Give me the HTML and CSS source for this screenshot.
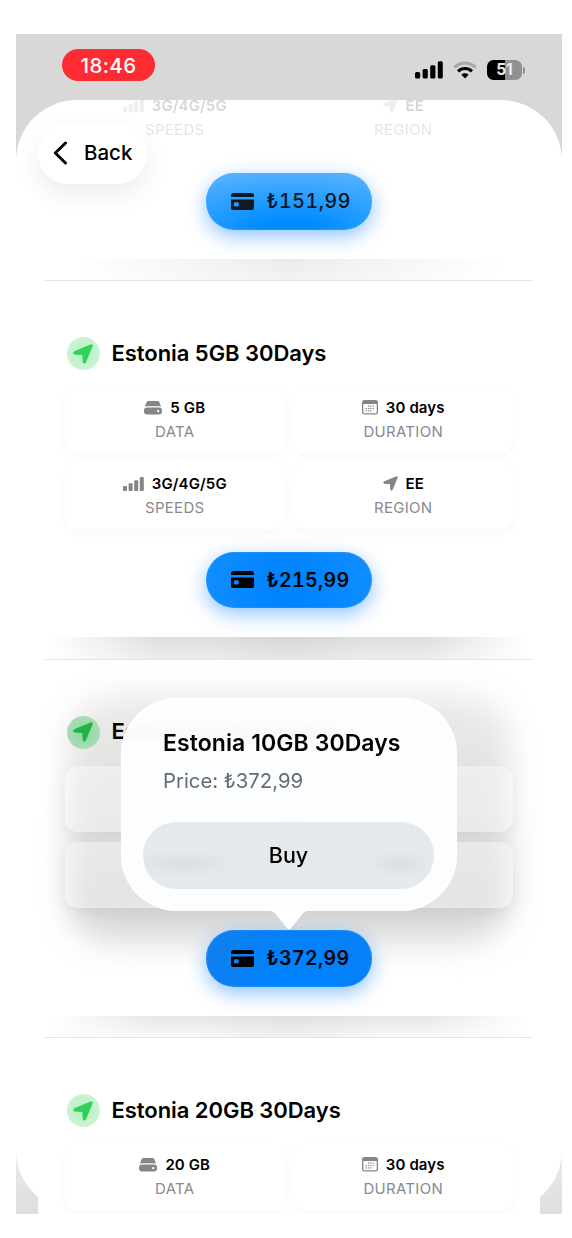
FILE: index.html
```html
<!DOCTYPE html>
<html lang="en">
<head>
<meta charset="utf-8">
<title>eSIM plans</title>
<link rel="stylesheet" href="styles.css">
</head>
<body>
<svg class="defs" width="0" height="0" aria-hidden="true">
  <symbol id="i-arrow" viewBox="0 0 20 20"><path stroke-width="1.200" stroke-linejoin="round" d="M18.700 1c.5.2.5.7.3 1.200L12.300 18.300c-.5 1.100-2 .8-2-.4L9.900 10.300 2 9.900C.800 9.800.4 8.300 1.600 7.800L17.800 1c.3-.1.600-.1.9 0z"/></symbol>
  <symbol id="i-bars" viewBox="0 0 21 14"><rect x="0" y="9" width="4" height="5" rx="1"/><rect x="5.600" y="6.300" width="4" height="7.700" rx="1"/><rect x="11.200" y="3.300" width="4" height="10.700" rx="1"/><rect x="16.800" y="0" width="4" height="14" rx="1"/></symbol>
  <symbol id="i-drive" viewBox="0 0 18 14"><path d="M4.800 0h8.400c1.200 0 1.900.5 2.300 1.500l1.600 4.200c-.6-.3-1.200-.4-1.900-.4H2.800c-.7 0-1.300.1-1.900.4l1.600-4.200C2.900.5 3.600 0 4.800 0z"/><path fill-rule="evenodd" d="M3 6.600h12a3 3 0 0 1 3 3v1a3 3 0 0 1-3 3H3a3 3 0 0 1-3-3v-1a3 3 0 0 1 3-3zm11.200 2.300a1.200 1.200 0 1 0 0 2.400 1.200 1.200 0 0 0 0-2.400z"/></symbol>
  <symbol id="i-cal" viewBox="0 0 16 15"><path fill-rule="evenodd" d="M2.500 0h11A2.500 2.500 0 0 1 16 2.500v9.500a2.500 2.500 0 0 1-2.500 2.500h-11A2.500 2.500 0 0 1 0 12V2.500A2.500 2.500 0 0 1 2.500 0zM1.300 4v8c0 .8.500 1.300 1.300 1.300h10.800c.8 0 1.300-.5 1.300-1.300V4z"/><path d="M6 5.500h1.300v1.200H6zm2.300 0h1.300v1.200H8.300zm2.300 0h1.300v1.200h-1.300zM3.700 7.900H5v1.200H3.700zm2.300 0h1.300v1.200H6zm2.300 0h1.300v1.200H8.300zm2.300 0h1.300v1.200h-1.300zM3.700 10.300H5v1.200H3.700zm2.300 0h1.300v1.200H6zm2.300 0h1.300v1.200H8.300z"/></symbol>
  <symbol id="i-card" viewBox="0 0 23 17"><path d="M2.600 0h17.800A2.600 2.600 0 0 1 23 2.600V4H0V2.600A2.600 2.600 0 0 1 2.600 0z"/><path fill-rule="evenodd" d="M0 6.500h23v7.900a2.600 2.600 0 0 1-2.600 2.600H2.600A2.600 2.600 0 0 1 0 14.400zM4 9.300c-.6 0-1 .4-1 1v2.200c0 .6.400 1 1 1h2.700c.6 0 1-.4 1-1v-2.200c0-.6-.4-1-1-1z"/></symbol>
</svg>

<main class="screen">
  <header class="status">
    <span class="clock">18:46</span>
    <div class="status-icons">
      <svg class="signal" width="28" height="18" viewBox="0 0 28 18"><rect x="0" y="11" width="5.200" height="6.500" rx="1.500"/><rect x="7.600" y="8" width="5.200" height="9.500" rx="1.500"/><rect x="15.200" y="4.300" width="5.200" height="13.200" rx="1.500"/><rect x="22.800" y="0.300" width="5" height="17.200" rx="1.500"/></svg>
      <svg class="wifi" width="24" height="18" viewBox="0 0 24 18"><g fill="none" stroke-width="3.200"><path stroke="#a8a8a8" d="M1.400 6.400a15.200 15.200 0 0 1 21.200 0"/><path stroke="#000" d="M5.100 10.300a9.900 9.900 0 0 1 13.800 0"/></g><path d="M12 17.500 8.400 13.800a5.200 5.200 0 0 1 7.200 0z"/></svg>
      <div class="battery"><span class="level">51</span><i class="nub"></i></div>
    </div>
  </header>

  <section class="sheet">
    <div class="list">
      <article class="plan plan--partial">
        <div class="tiles tiles--faded">
          <div class="tile"><div class="value"><svg class="ic bars"><use href="#i-bars"/></svg><b>3G/4G/5G</b></div><span class="label">SPEEDS</span></div>
          <div class="tile"><div class="value"><svg class="ic arrow"><use href="#i-arrow"/></svg><b>EE</b></div><span class="label">REGION</span></div>
        </div>
        <button class="buy buy--light"><svg class="ic card"><use href="#i-card"/></svg><span>₺151,99</span></button>
        <div class="foot foot--faint"></div>
      </article>

      <article class="plan">
        <h2 class="title"><span class="dot"><svg class="pin"><use href="#i-arrow"/></svg></span><span>Estonia 5GB 30Days</span></h2>
        <div class="tiles">
          <div class="tile"><div class="value"><svg class="ic drive"><use href="#i-drive"/></svg><b>5 GB</b></div><span class="label">DATA</span></div>
          <div class="tile"><div class="value"><svg class="ic cal"><use href="#i-cal"/></svg><b>30 days</b></div><span class="label">DURATION</span></div>
          <div class="tile"><div class="value"><svg class="ic bars"><use href="#i-bars"/></svg><b>3G/4G/5G</b></div><span class="label">SPEEDS</span></div>
          <div class="tile"><div class="value"><svg class="ic arrow"><use href="#i-arrow"/></svg><b>EE</b></div><span class="label">REGION</span></div>
        </div>
        <button class="buy"><svg class="ic card"><use href="#i-card"/></svg><span>₺215,99</span></button>
        <div class="foot"></div>
      </article>

      <article class="plan plan--active">
        <h2 class="title"><span class="dot"><svg class="pin"><use href="#i-arrow"/></svg></span><span>Estonia 10GB 30Days</span></h2>
        <div class="tiles">
          <div class="tile"></div>
          <div class="tile"></div>
          <div class="tile"></div>
          <div class="tile"></div>
        </div>
        <button class="buy buy--pressed"><svg class="ic card"><use href="#i-card"/></svg><span>₺372,99</span></button>
        <div class="foot foot--soft"></div>
        <div class="popover">
          <h3 class="pop-title">Estonia 10GB 30Days</h3>
          <p class="pop-price">Price: ₺372,99</p>
          <button class="confirm">Buy</button>
          <svg class="tail" width="44" height="21" viewBox="0 0 44 21"><path d="M0 0h44c-4 .2-6 1.500-9 4.500L24 18.200c-1.200 1.300-2.800 1.300-4 0L9 4.500C6 1.500 4 .2 0 0z"/></svg>
        </div>
      </article>

      <article class="plan">
        <h2 class="title"><span class="dot"><svg class="pin"><use href="#i-arrow"/></svg></span><span>Estonia 20GB 30Days</span></h2>
        <div class="tiles">
          <div class="tile"><div class="value"><svg class="ic drive"><use href="#i-drive"/></svg><b>20 GB</b></div><span class="label">DATA</span></div>
          <div class="tile"><div class="value"><svg class="ic cal"><use href="#i-cal"/></svg><b>30 days</b></div><span class="label">DURATION</span></div>
        </div>
      </article>
    </div>
    <button class="back"><svg width="15" height="24" viewBox="0 0 15 24"><path d="M12.500 2 2.300 12l10.200 10" fill="none" stroke="#000" stroke-width="2.900" stroke-linecap="round" stroke-linejoin="round"/></svg><span>Back</span></button>
  </section>
</main>
</body>
</html>
```
FILE: styles.css
```css
* { box-sizing: border-box; margin: 0; padding: 0; }

body {
  background: #fff;
  color: #000;
  font-family: Inter, "Liberation Sans", sans-serif;
}

button { border: 0; font: inherit; color: inherit; }

.defs { position: absolute; }

.screen {
  width: 546px;
  height: 1180px;
  margin: 34px 0 0 16px;
  overflow: hidden;
  background: linear-gradient(#d8d8d8 0 110px, #cfcfd0 130px 1090px, #ececee 1110px, #dedee1 1180px);
}

/* status bar */
.status {
  height: 66px;
  padding: 15px 37px 0 46px;
  display: flex;
  justify-content: space-between;
  align-items: flex-start;
}
.clock {
  width: 93px;
  height: 32px;
  border-radius: 16px;
  background: #ff2b33;
  color: #fff;
  font-size: 20.500px;
  font-weight: 500;
  letter-spacing: .4px;
  line-height: 33px;
  text-align: center;
}
.status-icons { display: flex; align-items: center; gap: 10px; padding-top: 11px; }
.battery { display: flex; align-items: center; gap: 1px; }
.level {
  width: 35px;
  height: 20px;
  border-radius: 6.500px;
  background: linear-gradient(90deg, #000 52%, #919191 52%);
  color: #e9e9e9;
  font-size: 15.500px;
  font-weight: 700;
  line-height: 20px;
  text-align: center;
}
.nub { width: 2px; height: 7px; border-radius: 0 2px 2px 0; background: #919191; }

/* sheet */
.sheet {
  position: relative;
  height: 1111px;
  border-radius: 61px;
  background: #fff;
}
.list {
  width: 502px;
  height: 1114px;
  margin: 0 auto;
  padding: 0 7px;
  overflow: hidden;
  border-radius: 50px 50px 0 0;
  background: #fff;
}
.back {
  position: absolute;
  left: 22px;
  top: 23px;
  width: 109px;
  height: 60.500px;
  border-radius: 30px;
  background: #fff;
  box-shadow: 0 10px 24px rgba(0, 0, 0, .08);
  display: flex;
  align-items: center;
  gap: 16px;
  padding: 0 0 1px 15px;
  font-size: 20.500px;
  font-weight: 500;
}

/* plans */
.plan {
  position: relative;
  display: flex;
  flex-direction: column;
  align-items: center;
  padding: 56px 20px 0;
  border-bottom: 1px solid #e4e4e6;
}
.plan:last-child { border-bottom: 0; }
.plan--partial { padding-top: 0; margin-top: -15.500px; }
.title {
  align-self: flex-start;
  display: flex;
  align-items: center;
  gap: 12px;
  height: 33px;
  margin: 0 0 17px 1.500px;
  font-size: 22px;
  font-weight: 600;
  letter-spacing: -.05px;
  line-height: 32px;
  white-space: nowrap;
}
.title > span:last-child { height: 34px; }
.dot {
  width: 33px;
  height: 33px;
  border-radius: 50%;
  background: radial-gradient(#b5efc2, #d3f6da);
  display: grid;
  place-items: center;
}
.pin { width: 20px; height: 20px; fill: #30d158; stroke: #30d158; }

.tiles {
  width: 448px;
  display: grid;
  grid-template-columns: 1fr 1fr;
  gap: 10px 9px;
}
.tile {
  height: 66px;
  border-radius: 13px;
  background: #fff;
  box-shadow: 0 4px 11px rgba(0, 0, 0, .032);
  display: flex;
  flex-direction: column;
  align-items: center;
  gap: 6px;
  padding-top: 11px;
}
.value { display: flex; align-items: center; gap: 8px; height: 19px; }
.value b { font-size: 15px; font-weight: 600; letter-spacing: .12px; }
.label { font-size: 15px; line-height: 18px; letter-spacing: .3px; color: #89898c; }
.ic { fill: #858587; }
.bars { width: 21px; height: 14px; }
.arrow { width: 15px; height: 15px; stroke: #858587; }
.drive { width: 18px; height: 14px; }
.cal { width: 16px; height: 15px; }
.tiles--faded .tile { box-shadow: none; }
.tiles--faded .value b { opacity: .17; }
.tiles--faded .ic { opacity: .14; }
.tiles--faded .label { opacity: .22; }

.buy {
  width: 166px;
  height: 56.500px;
  margin: 22.500px 0 29px;
  padding-left: 24.500px;
  border-radius: 28px;
  background: radial-gradient(circle at 50% 65%, #0083ff 15%, #1490ff 110%);
  box-shadow: 0 6px 20px rgba(0, 122, 255, .45), inset 0 0 1px 1px rgba(70, 170, 255, .3);
  display: flex;
  align-items: center;
  gap: 13px;
  font-size: 19.500px;
  font-weight: 600;
  font-variant-numeric: tabular-nums;
  letter-spacing: .35px;
}
.buy--light {
  background: radial-gradient(ellipse 110% 120% at 50% 100%, #008cff 15%, #64b9ff 100%);
  color: #0b1420;
  font-weight: 500;
  letter-spacing: .6px;
}
.buy--pressed { background: radial-gradient(circle at 60% 80%, #0082ff 20%, #147ee6 120%); }
.card { width: 23px; height: 17px; fill: #000; }
.buy--light .card { fill: #101a22; }

/* lower lip of each plan, shaded toward the divider */
.foot {
  width: 478px;
  height: 21.500px;
  background: radial-gradient(circle 80px at 50% 0, rgba(90, 90, 110, .06), transparent), linear-gradient(#dedede, #ececec);
  -webkit-mask-image: linear-gradient(90deg, transparent, #000 22%, #000 78%, transparent);
  mask-image: linear-gradient(90deg, transparent, #000 22%, #000 78%, transparent);
}
.foot--soft { background: radial-gradient(circle 90px at 50% 0, rgba(90, 90, 110, .05), transparent), linear-gradient(#e6e6e7, #f8f8fa); }
.foot--faint {
  background: linear-gradient(#ebebec, #f2f2f4);
  -webkit-mask-image: linear-gradient(90deg, transparent 5%, #000 50%, transparent 95%);
  mask-image: linear-gradient(90deg, transparent 5%, #000 50%, transparent 95%);
}

/* plan with the open popover */
.plan--active { z-index: 1; }
.plan--active::before {
  content: "";
  position: absolute;
  z-index: -1;
  inset: 34px 22px 92px;
  border-radius: 50px;
  background: linear-gradient(#ebebea, #dededd 55%, #d3d3d3 85%, #e4e4e4);
  filter: blur(15px);
}
.plan--active .tile {
  background: rgba(255, 255, 255, .36);
  box-shadow: 0 4px 14px rgba(0, 0, 0, .045), inset 0 0 0 1px rgba(255, 255, 255, .08);
}
.plan--active .dot { background: radial-gradient(#8fd5a0, #b5dfbe); }
.plan--active .pin { fill: #1db544; stroke: #1db544; }

.popover {
  position: absolute;
  left: 76px;
  top: 38.500px;
  width: 336px;
  height: 212.500px;
  padding: 30px 22px 22px;
  border-radius: 56px;
  background: rgba(253, 254, 255, .96);
  -webkit-backdrop-filter: blur(5px);
  backdrop-filter: blur(5px);
  box-shadow: inset 0 0 2px 2px #fff;
  display: flex;
  flex-direction: column;
}
.pop-title {
  padding-left: 20px;
  font-size: 23px;
  line-height: 31px;
  font-weight: 600;
  letter-spacing: .08px;
  white-space: nowrap;
}
.pop-price {
  padding-left: 20px;
  margin-top: 8px;
  font-size: 20.300px;
  line-height: 27px;
  color: #666b73;
}
.confirm {
  width: 291px;
  height: 66.500px;
  margin-top: auto;
  border-radius: 33px;
  background: radial-gradient(ellipse 55px 14px at 14% 62%, #dcdee0, transparent), radial-gradient(ellipse 35px 14px at 88% 62%, #dcdee0, transparent), #e6e9eb;
  font-size: 21.500px;
  font-weight: 500;
}
.tail { position: absolute; left: 146px; top: 212px; fill: #fff; }
```
